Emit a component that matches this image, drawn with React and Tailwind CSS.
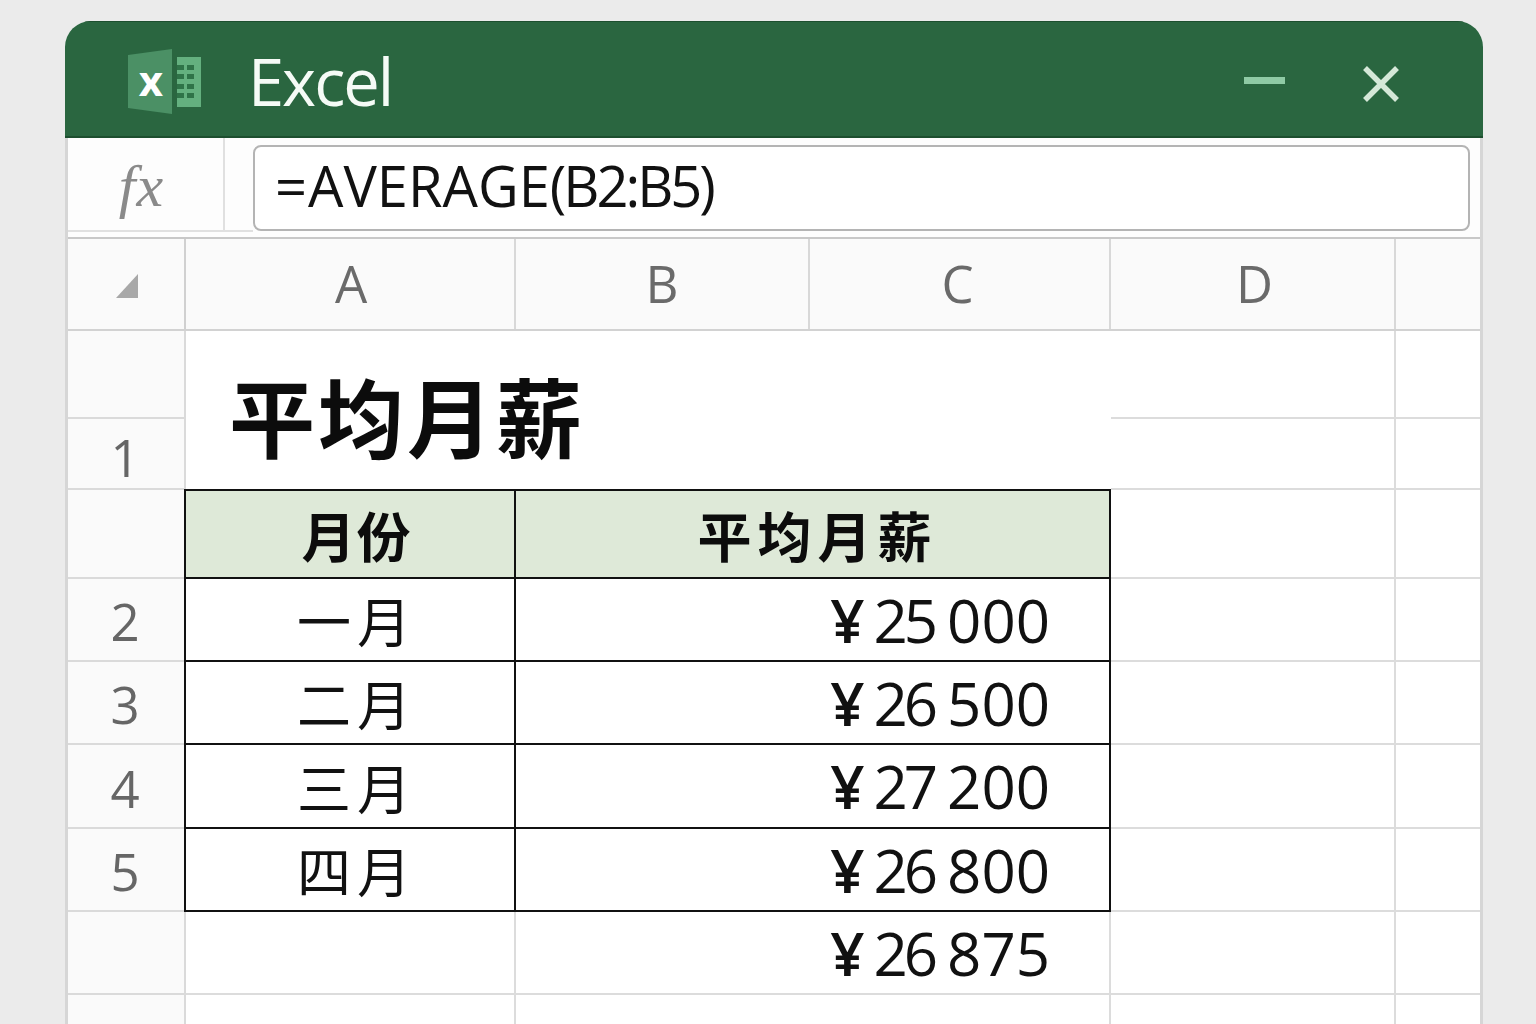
const latin = "font-['Open_Sans','Noto_Sans',sans-serif]";
const cjk = "font-['Noto_Sans_CJK_SC','Noto_Sans_CJK_JP',sans-serif]";
const grid = "border-[#dcdcdc]";

function ExcelLogo() {
  return (
    <svg width="76" height="68" viewBox="0 0 76 68" className="shrink-0">
      <path d="M0 7 L44 1 L44 66 L0 60 Z" fill="#4b9065" />
      <rect x="49" y="9" width="24" height="50" fill="#64b07f" />
      <g fill="#2f7348">
        <rect x="49" y="17" width="7" height="5" />
        <rect x="59" y="17" width="7" height="5" />
        <rect x="49" y="26" width="7" height="5" />
        <rect x="59" y="26" width="7" height="5" />
        <rect x="49" y="36" width="7" height="5" />
        <rect x="59" y="36" width="7" height="5" />
        <rect x="49" y="45" width="7" height="5" />
        <rect x="59" y="45" width="7" height="5" />
      </g>
      <text x="23" y="48" textAnchor="middle" fill="#fff" fontSize="42" fontWeight="700" fontFamily="Open Sans">x</text>
    </svg>
  );
}

function ColHead({ w, label, last, nudge = "" }) {
  return (
    <div className={`${w} h-full flex items-center justify-center bg-[#fafafa] ${last ? "" : "border-r-2 border-[#d8d8d8]"} ${latin} text-[51px] text-[#6a6a6a] pb-[2px] ${nudge}`}>
      {label}
    </div>
  );
}

function RowHead({ n, h, bottom }) {
  return (
    <div className={`${h} w-[118px] shrink-0 flex ${bottom ? "items-end pb-[5px]" : "items-center pt-[4px]"} justify-center pr-[2px] bg-[#fafafa] border-r-2 border-b-2 border-[#dadada] ${latin} text-[51px] leading-none text-[#666]`}>
      {n}
    </div>
  );
}

function EmptyCols() {
  return (
    <>
      <div className={`w-[285px] shrink-0 border-r-2 border-b-2 ${grid}`} />
      <div className={`w-[84px] shrink-0 border-b-2 ${grid}`} />
    </>
  );
}

function Amount({ value }) {
  const [head, tail] = value.split(" ");
  return (
    <div className={`flex items-center justify-end gap-[7px] h-full pr-[59px] ${latin} text-[60px] leading-none text-[#111]`}>
      <span className="mr-[3px] font-semibold tracking-[-1px]">¥</span>
      <span className="mr-[6px] tracking-[-4px]">{head}</span>
      <span>{tail}</span>
    </div>
  );
}

const months = [
  { n: "2", label: "一月", value: "25 000", h: "h-[83px]" },
  { n: "3", label: "二月", value: "26 500", h: "h-[83px]" },
  { n: "4", label: "三月", value: "27 200", h: "h-[84px]" },
  { n: "5", label: "四月", value: "26 800", h: "h-[83px]" },
];

export default function App() {
  return (
    <div className="h-[1024px] overflow-hidden bg-[#ebebeb] pt-[21px] pl-[65px]">
      <div className="w-[1418px] h-[1003px] overflow-hidden rounded-t-[26px] bg-white">
        {/* title bar */}
        <div className="h-[117px] flex items-center bg-[#2a6640] border-t border-b-2 border-[#1d4f2f] pl-[63px] pt-[5px]">
          <ExcelLogo />
          <div className={`ml-[44px] ${latin} font-medium text-[65px] leading-none text-[#f5fbf6] tracking-[-2px]`}>Excel</div>
          <div className="ml-auto w-[41px] h-[7px] mb-[3px] bg-[#8fcaa5]" />
          <svg width="38" height="38" viewBox="0 0 38 38" className="ml-[77px] mr-[83px] mt-[5px]">
            <path d="M3 3 L35 35 M35 3 L3 35" stroke="#d5e8d8" strokeWidth="5.5" />
          </svg>
        </div>

        <div className="h-[886px] border-x-[3px] border-[#d6d6d6]">
          {/* formula bar */}
          <div className="h-[101px] flex border-b-2 border-[#c8c8c8] bg-[#fdfdfd]">
            <div className="w-[157px] h-[94px] flex items-center justify-center pr-2 pt-1 border-r-2 border-b-2 border-[#e0e0e0] font-['Liberation_Serif',serif] italic text-[60px] tracking-[1px] text-[#8a8a8a]">
              fx
            </div>
            <div className="w-[28px] h-[94px] border-b-2 border-[#e0e0e0]" />
            <div className={`w-[1217px] h-[86px] mt-[7px] flex items-center pl-[20px] pb-[6px] rounded-[8px] border-2 border-[#b4b4b4] bg-white ${latin} text-[56px] text-[#111]`}>
              <span className="mr-[2px] tracking-[-1px]">=</span>
              <span>AVERAGE</span>
              <span className="tracking-[-3px]">(B2:B5)</span>
            </div>
          </div>

          {/* column letters */}
          <div className="h-[92px] flex border-b-2 border-[#d2d2d2]">
            <div className="w-[118px] h-full flex items-center justify-center bg-[#fafafa] border-r-2 border-[#d0d0d0]">
              <svg width="22" height="24" viewBox="0 0 22 24" className="mr-[-2px] mt-[4px]">
                <path d="M22 0 L22 24 L0 24 Z" fill="#a8a8a8" />
              </svg>
            </div>
            <ColHead w="w-[330px]" label="A" nudge="pl-[2px]" />
            <ColHead w="w-[294px]" label="B" />
            <ColHead w="w-[301px]" label="C" nudge="pr-[4px]" />
            <ColHead w="w-[285px]" label="D" nudge="pl-[4px]" />
            <ColHead w="w-[84px]" label="" last />
          </div>

          {/* title block spans two rows */}
          <div className="flex h-[159px]">
            <div className="w-[118px] shrink-0 flex flex-col">
              <RowHead n="" h="h-[88px]" />
              <RowHead n="1" h="h-[71px]" bottom />
            </div>
            <div className={`w-[925px] shrink-0 flex items-center pl-[43px] pt-[8px] ${cjk} font-bold text-[86px] leading-none tracking-[3px] text-[#0c0c0c]`}>
              平均月薪
            </div>
            <div className="flex flex-col">
              <div className="flex h-[88px]"><EmptyCols /></div>
              <div className="flex h-[71px]"><EmptyCols /></div>
            </div>
          </div>

          {/* table header */}
          <div className="flex h-[89px]">
            <RowHead n="" h="h-[89px]" />
            <div className="w-[927px] h-[90px] -mt-[1px] shrink-0 flex border-2 border-[#111] bg-[#dee9d8] -ml-[2px]">
              <div className={`w-[330px] flex items-center justify-center pl-[13px] border-r-2 border-[#111] ${cjk} font-bold text-[54px] tracking-[1px] text-[#0c0c0c]`}>月份</div>
              <div className={`flex-1 flex items-center justify-center pl-[10px] ${cjk} font-bold text-[54px] tracking-[6px] text-[#0c0c0c]`}>平均月薪</div>
            </div>
            <EmptyCols />
          </div>

          {/* data rows */}
          {months.map((m) => (
            <div key={m.n} className={`flex ${m.h}`}>
              <RowHead n={m.n} h={m.h} />
              <div className="w-[927px] shrink-0 flex border-b-2 border-x-2 border-[#111] -ml-[2px]">
                <div className={`w-[330px] flex items-center justify-center pl-[14px] border-r-2 border-[#111] ${cjk} text-[54px] tracking-[6px] text-[#111]`}>{m.label}</div>
                <div className="flex-1"><Amount value={m.value} /></div>
              </div>
              <EmptyCols />
            </div>
          ))}

          {/* average row */}
          <div className="flex h-[83px]">
            <RowHead n="" h="h-[83px]" />
            <div className={`w-[330px] shrink-0 border-r-2 border-b-2 ${grid}`} />
            <div className={`w-[595px] shrink-0 border-r-2 border-b-2 ${grid}`}>
              <Amount value="26 875" />
            </div>
            <EmptyCols />
          </div>

          <div className="flex h-[40px]">
            <RowHead n="" h="h-[40px]" />
            <div className={`w-[330px] shrink-0 border-r-2 ${grid}`} />
            <div className={`w-[595px] shrink-0 border-r-2 ${grid}`} />
            <div className={`w-[285px] shrink-0 border-r-2 ${grid}`} />
          </div>
        </div>
      </div>
    </div>
  );
}
